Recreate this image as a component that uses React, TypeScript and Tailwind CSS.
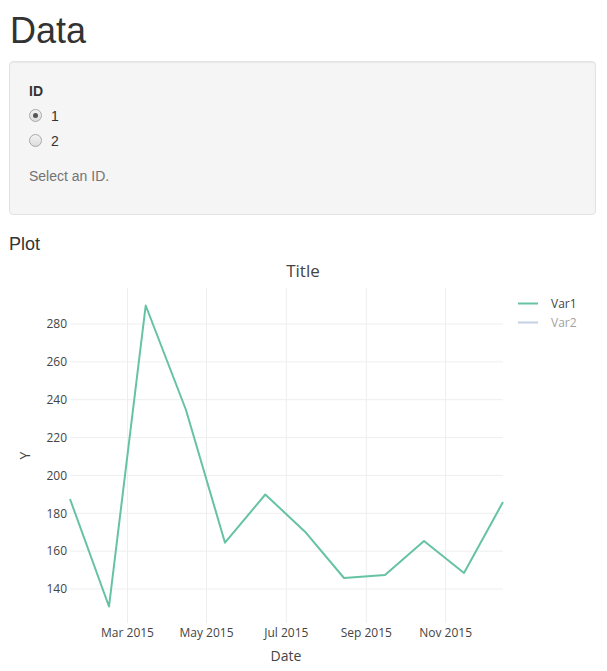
import React from 'react';

// ─── Chart data (page coordinates) ─────────────────────────────────────────────

const yTicks = [280, 260, 240, 220, 200, 180, 160, 140];
const yOf = (v: number) => 589 - (v - 140) * (265 / 140);

const xTicks = [
  { x: 127.5, label: 'Mar 2015' },
  { x: 206.5, label: 'May 2015' },
  { x: 286.3, label: 'Jul 2015' },
  { x: 366.3, label: 'Sep 2015' },
  { x: 445.6, label: 'Nov 2015' },
];

const points: [number, number][] = [
  [70, 499], [109, 606.5], [145.7, 305.5], [186, 410], [225, 542.7], [265.3, 494.5],
  [305, 531.7], [344, 578], [385, 575], [424, 541], [464, 573], [503, 502],
];

const RadioDot: React.FC<{ checked?: boolean }> = ({ checked }) => (
  <span className="w-[13px] h-[13px] rounded-full border border-[#a9a9a9] bg-gradient-to-b from-[#f3f3f3] to-[#dcdcdc] flex items-center justify-center shrink-0">
    {checked && <span className="w-[5px] h-[5px] rounded-full bg-[#555]" />}
  </span>
);

const Chart: React.FC = () => (
  <svg width={607} height={417} className="block" style={{ fontFamily: '"Open Sans", sans-serif' }}>
    <g transform="translate(0,-254)">
      {/* Title */}
      <text x={303} y={277} textAnchor="middle" fontSize={17} fill="#444">Title</text>

      {/* Grid */}
      {yTicks.map((v) => (
        <line key={v} x1={70} x2={503} y1={yOf(v)} y2={yOf(v)} stroke="#eee" strokeWidth={1} />
      ))}
      {xTicks.map((t) => (
        <line key={t.label} x1={t.x} x2={t.x} y1={288} y2={623} stroke="#eee" strokeWidth={1} />
      ))}

      {/* Y tick labels */}
      {yTicks.map((v) => (
        <text key={v} x={67} y={yOf(v) + 4.3} textAnchor="end" fontSize={12} fill="#444">{v}</text>
      ))}

      {/* X tick labels */}
      {xTicks.map((t) => (
        <text key={t.label} x={t.x} y={637} textAnchor="middle" fontSize={12} fill="#444">{t.label}</text>
      ))}

      {/* Axis titles */}
      <text x={286} y={661} textAnchor="middle" fontSize={14} fill="#444">Date</text>
      <text x={30} y={455.5} textAnchor="middle" fontSize={14} fill="#444" transform="rotate(-90 30 455.5)">Y</text>

      {/* Trace */}
      <polyline
        points={points.map((p) => p.join(',')).join(' ')}
        fill="none"
        stroke="#66c2a5"
        strokeWidth={2}
        strokeLinejoin="round"
      />

      {/* Legend */}
      <line x1={518} x2={538} y1={303.5} y2={303.5} stroke="#66c2a5" strokeWidth={2} />
      <text x={551} y={307.8} fontSize={12} fill="#444">Var1</text>
      <g opacity={0.5}>
        <line x1={518} x2={538} y1={322.5} y2={322.5} stroke="#8da0cb" strokeWidth={2} />
        <text x={551} y={326.8} fontSize={12} fill="#444">Var2</text>
      </g>
    </g>
  </svg>
);

export default function App() {
  return (
    <div className="w-[607px] bg-white text-[14px] leading-[20px] text-[#333]" style={{ fontFamily: '"Liberation Sans", Arial, sans-serif' }}>
      <div className="pl-[9px] pr-[11px]">
        <h1 className="text-[36px] leading-[39.6px] font-normal mt-[11px] mb-[10px] pl-[1px]">Data</h1>

        <div className="rounded-[4px] border border-[#e3e3e3] bg-[#f5f5f5] shadow-[inset_0_1px_1px_rgba(0,0,0,0.05)] p-[19px] h-[154px]">
          <div className="font-bold mb-[5px]">ID</div>
          <div className="flex flex-col gap-[5px]">
            <label className="flex items-center gap-[9px] pl-[-1px] h-[20px]">
              <RadioDot checked />
              <span>1</span>
            </label>
            <label className="flex items-center gap-[9px] h-[20px]">
              <RadioDot />
              <span>2</span>
            </label>
          </div>
          <div className="mt-[15px] text-[#737373]">Select an ID.</div>
        </div>

        <div className="mt-[20px] text-[18px] leading-[19.8px]">Plot</div>
      </div>

      <Chart />
    </div>
  );
}
